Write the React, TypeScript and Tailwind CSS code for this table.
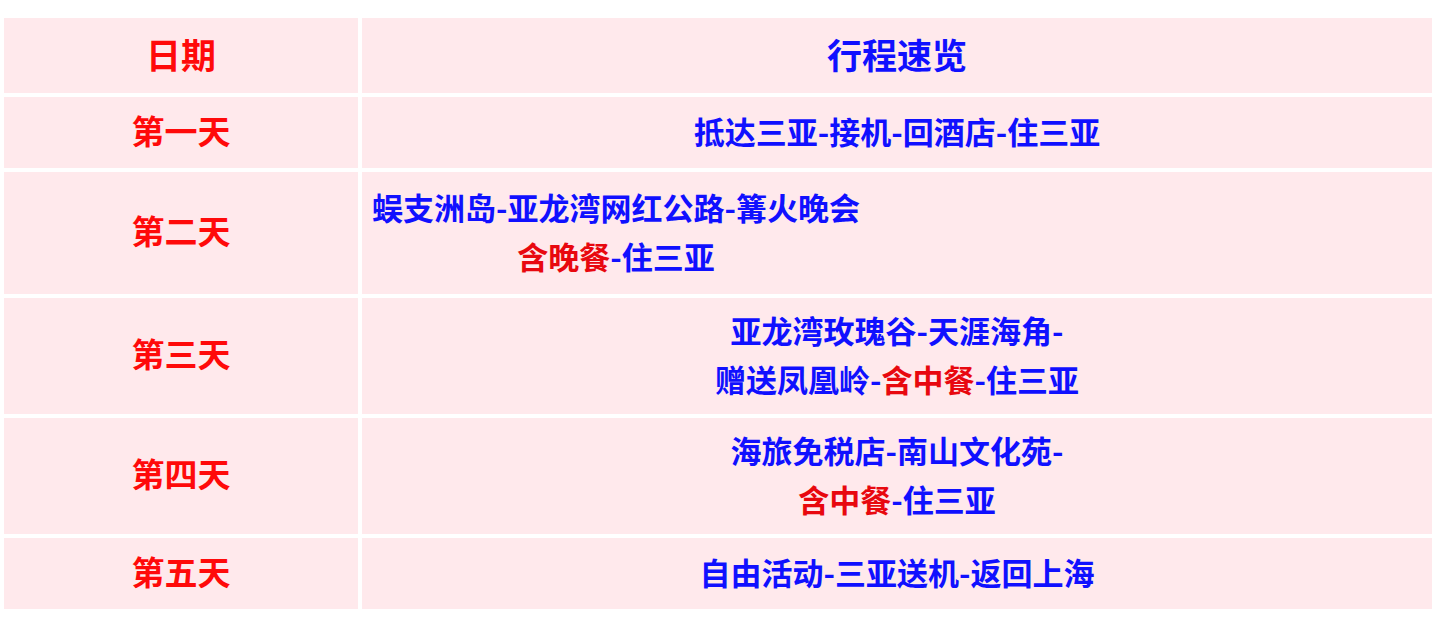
const blue = "text-[#1010ff]";
const red = "text-[#e8080f]";

type Part = { text: string; red?: boolean };

const rows: { day: string; lines: Part[][]; h: string; left?: boolean }[] = [
  { day: "第一天", lines: [[{ text: "抵达三亚-接机-回酒店-住三亚" }]], h: "h-[71px]" },
  {
    day: "第二天",
    lines: [
      [{ text: "蜈支洲岛-亚龙湾网红公路-篝火晚会" }],
      [{ text: "含晚餐", red: true }, { text: "-住三亚" }],
    ],
    h: "h-[122px]",
    left: true,
  },
  {
    day: "第三天",
    lines: [
      [{ text: "亚龙湾玫瑰谷-天涯海角-" }],
      [{ text: "赠送凤凰岭-" }, { text: "含中餐", red: true }, { text: "-住三亚" }],
    ],
    h: "h-[116px]",
  },
  {
    day: "第四天",
    lines: [
      [{ text: "海旅免税店-南山文化苑-" }],
      [{ text: "含中餐", red: true }, { text: "-住三亚" }],
    ],
    h: "h-[116px]",
  },
  { day: "第五天", lines: [[{ text: "自由活动-三亚送机-返回上海" }]], h: "h-[71px]" },
];

export default function App() {
  return (
    <div
      className="bg-white pt-[14px] min-h-screen"
      style={{ fontFamily: '"Noto Sans CJK SC", "Noto Sans", sans-serif' }}
    >
      <table className="w-[1436px] border-separate border-spacing-[4px] font-bold">
        <thead>
          <tr className="h-[75px]">
            <th className="w-[354px] bg-[#ffe9ec] pb-[3px] text-[35px] text-[#ff0a0a] font-bold">日期</th>
            <th className={`bg-[#ffe9ec] pb-[3px] text-[35px] ${blue} font-bold`}>行程速览</th>
          </tr>
        </thead>
        <tbody>
          {rows.map((row) => (
            <tr key={row.day} className={row.h}>
              <td className="bg-[#ffe9ec] pb-[4px] text-center text-[33px] text-[#ff0a0a]">{row.day}</td>
              <td
                className={`bg-[#ffe9ec] pb-[5px] text-[31px] leading-[49px] ${blue} ${
                  row.left ? "text-left pl-[10px]" : "text-center"
                }`}
              >
                <div className={row.left ? "inline-block text-center" : ""}>
                  {row.lines.map((line, i) => (
                    <div key={i}>
                      {line.map((p, j) => (
                        <span key={j} className={p.red ? red : ""}>
                          {p.text}
                        </span>
                      ))}
                    </div>
                  ))}
                </div>
              </td>
            </tr>
          ))}
        </tbody>
      </table>
    </div>
  );
}
